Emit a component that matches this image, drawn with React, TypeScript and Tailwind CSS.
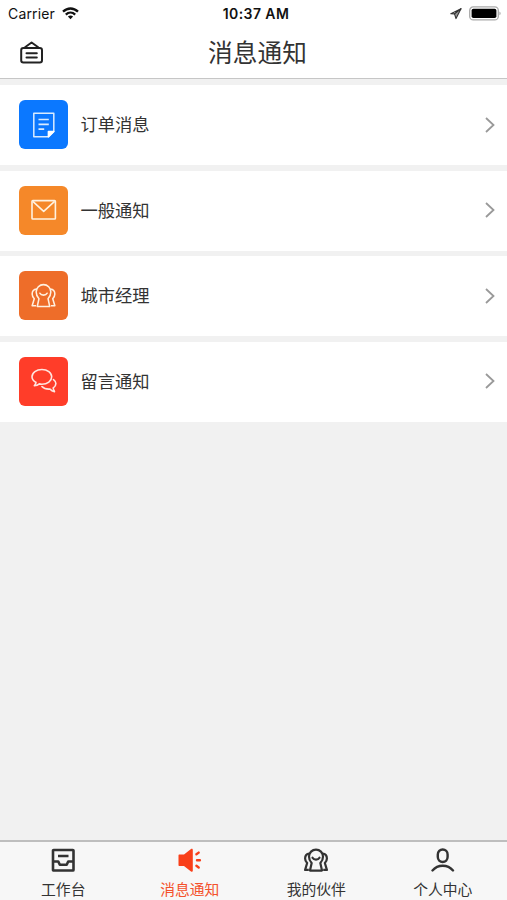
import type { ReactNode } from 'react'

const DocIcon = () => (
  <svg width="26" height="28" viewBox="0 0 26 28" fill="none" stroke="#d9ebff" strokeWidth="1.5">
    <path d="M2.8 2.2h20v18.3l-5.2 5.3H2.8z" strokeLinejoin="round" />
    <path d="M7.5 8.5h10.3M7.5 13.3h10.3M7.5 18.2h5.7" strokeWidth="1.7" />
    <path d="M17.4 25.8v-5.3h5.4z" fill="#fff" stroke="#fff" strokeLinejoin="round" />
  </svg>
)

const MailIcon = () => (
  <svg width="26" height="22" viewBox="0 0 26 22" fill="none" stroke="#fff2e0" strokeWidth="1.6" strokeLinejoin="round">
    <rect x="1" y="1.6" width="23.4" height="18.4" rx="0.8" />
    <path d="M1.8 2.4l10.9 10 10.9-10" />
  </svg>
)

const PeopleIcon = ({ size, color, weight }: { size: number; color: string; weight: number }) => (
  <svg
    width={size}
    height={size}
    viewBox="0 0 26 26"
    fill="none"
    stroke={color}
    strokeWidth={weight}
    strokeLinejoin="round"
  >
    <path d="M8.3 16.3C6.5 14.5 5.4 12 5.4 9.3a7.6 7.6 0 0 1 15.2 0c0 2.7-1.1 5.2-2.9 7l1.8 8.1h-13z" />
    <path d="M9.2 10.6c1.5 2.7 6.1 2.7 7.6 0" strokeLinecap="round" />
    <path d="M5.9 6.2C3 6.5 1.2 8.8 1.2 11.4c0 2 .9 3.6 2.2 4.9L1.2 23.7h4" />
    <path d="M20.1 6.2c2.9.3 4.7 2.6 4.7 5.2 0 2-.9 3.6-2.2 4.9l2.2 7.4h-4" />
  </svg>
)

const ChatIcon = () => (
  <svg
    width="26"
    height="26"
    viewBox="0 0 26 26"
    fill="none"
    stroke="#ffe5df"
    strokeWidth="1.6"
    strokeLinecap="round"
    strokeLinejoin="round"
  >
    <path d="M5 14.5C2.7 13.2 1 11.3 1 8.8c0-4.2 4.4-7.3 9.9-7.3s9.8 3.1 9.8 7.3-4.3 7.4-9.8 7.4c-.9 0-1.8-.1-2.6-.3-1.4 1.2-3 1.7-5 1.8.9-.9 1.5-2 1.7-3.400z" />
    <path d="M22.5 11.6c1.6 1.2 2.4 2.5 2.4 4 0 1.8-1.1 3.4-2.7 4.4.1 1.3.6 2.4 1.3 3.7-1.9-.3-3.5-1.3-4.6-2.6-3 .2-6.1-.6-8-2.6" />
  </svg>
)

const InboxIcon = () => (
  <svg width="24" height="24" viewBox="0 0 24 24" fill="none" stroke="#333" strokeWidth="2.6" strokeLinejoin="round">
    <rect x="2" y="2" width="20.5" height="20.5" rx="0.6" />
    <path d="M7 8h10.5M2 13.500h5.300l1.500 3.300h6.900l1.500-3.300h5.300" />
  </svg>
)

const SpeakerIcon = () => (
  <svg width="24" height="24" viewBox="0 0 24 24" fill="none" stroke="#f93f19" strokeWidth="2.4" strokeLinecap="round">
    <path
      d="M1.500 6.500H6l7-5.500c.9-.6 1.800-.2 1.800.8v20.900c0 1-.9 1.300-1.800.7l-7-5.500H1.500c-.7 0-1-.3-1-1V7.500c0-.7.3-1 1-1z"
      fill="#f93f19"
      stroke="none"
    />
    <path d="M18.400 6.300l2.300-1.700M19 12.200h2.900M18.400 17.800l2.300 1.700" />
  </svg>
)

const UserIcon = () => (
  <svg width="24" height="24" viewBox="0 0 24 24" fill="none" stroke="#333" strokeWidth="2.4" strokeLinecap="round">
    <rect x="6.8" y="1.5" width="9.8" height="12.5" rx="4.9" />
    <path d="M1.500 22.400c5.300-6.300 15.200-6.300 20.500 0" />
  </svg>
)

const HomeIcon = () => (
  <svg
    width="24"
    height="24"
    viewBox="0 0 24 24"
    fill="none"
    stroke="#222"
    strokeWidth="2"
    strokeLinecap="round"
    strokeLinejoin="round"
  >
    <rect x="2.2" y="7" width="20.8" height="14.5" rx="2.2" />
    <path d="M6 6.200l6.600-4.700 6.600 4.700M7.500 12.200h10.300M7.500 16.400h10.300" />
  </svg>
)

const StatusBar = () => (
  <div className="flex h-[27px] items-center justify-between pl-2 pr-[6px] text-[#111]">
    <div className="flex w-[150px] items-center gap-[7px]">
      <span className="text-[14px] leading-5 tracking-[0.15px]">Carrier</span>
      <svg width="17" height="13" viewBox="0 0 17 13" fill="none" stroke="#111" strokeWidth="2.3">
        <path d="M1 4.700c4.500-4.300 10.500-4.300 15 0M3.800 7.600c2.800-2.700 6.600-2.700 9.400 0" />
        <path d="M5.900 9.600c1.600-1.400 3.600-1.400 5.200 0l-2.600 2.700z" fill="#111" stroke="none" />
      </svg>
    </div>
    <span className="pl-[3px] text-[14px] font-semibold leading-5 tracking-[0.4px]">10:37 AM</span>
    <div className="flex w-[150px] items-center justify-end gap-[7px]">
      <svg width="12" height="12" viewBox="0 0 12 12" stroke="#333" strokeWidth="1.1" strokeLinejoin="round">
        <path d="M11 .8L.8 5.800l3.700.1z" fill="#fff" />
        <path d="M11 .8L4.500 5.900 6 10.600z" fill="#999" />
      </svg>
      <svg width="32" height="15" viewBox="0 0 32 15">
        <rect x="0.7" y="0.9" width="28.6" height="13" rx="3.5" fill="#fff" stroke="#aaa" strokeWidth="1.3" />
        <rect x="2.6" y="2.8" width="24.8" height="9.2" rx="1.8" fill="#000" />
        <path d="M30.500 5.500c1.400.8 1.400 3 0 3.800z" fill="#999" />
      </svg>
    </div>
  </div>
)

const rows: { label: string; tile: string; icon: ReactNode }[] = [
  { label: '订单消息', tile: 'bg-[#0b78ff]', icon: <DocIcon /> },
  { label: '一般通知', tile: 'bg-[#f58829]', icon: <MailIcon /> },
  { label: '城市经理', tile: 'bg-[#ee6d29]', icon: <PeopleIcon size={25} color="#fff0df" weight={1.6} /> },
  { label: '留言通知', tile: 'bg-[#ff3d29]', icon: <ChatIcon /> },
]

const tabs: { label: string; active?: boolean; icon: ReactNode }[] = [
  { label: '工作台', icon: <InboxIcon /> },
  { label: '消息通知', active: true, icon: <SpeakerIcon /> },
  { label: '我的伙伴', icon: <PeopleIcon size={24} color="#333" weight={2.4} /> },
  { label: '个人中心', icon: <UserIcon /> },
]

const App = () => (
  <div className="flex h-[900px] w-[507px] flex-col overflow-hidden bg-[#f1f1f1] font-['Inter','Noto_Sans_CJK_SC',sans-serif]">
    <header className="h-[79px] shrink-0 border-b border-[#c6c6c6] bg-white">
      <StatusBar />
      <div className="grid h-[51px] grid-cols-[84px_1fr_76px] items-center">
        <div className="pl-[19px]">
          <HomeIcon />
        </div>
        <h1 className="text-center text-[24.7px] font-normal leading-8 text-[#333]">消息通知</h1>
      </div>
    </header>

    <main className="flex flex-1 flex-col gap-[5.6px] pt-[6px]">
      {rows.map((row) => (
        <div key={row.label} className="flex h-[80px] items-center bg-white pb-[0.6px] pl-[19px] pr-[11px]">
          <div className={`flex h-[49px] w-[49px] items-center justify-center rounded-[6px] ${row.tile}`}>
            {row.icon}
          </div>
          <span className="ml-[12.5px] flex-1 pt-px text-[17.3px] leading-6 text-[#333]">{row.label}</span>
          <svg width="12" height="18" viewBox="0 0 12 18" fill="none" stroke="#999" strokeWidth="1.8">
            <path d="M2 2l7.500 7L2 16" />
          </svg>
        </div>
      ))}
    </main>

    <nav className="grid h-[60px] shrink-0 grid-cols-4 border-t-2 border-[#bebebe] bg-[#f7f7f7] pr-px">
      {tabs.map((tab) => (
        <div
          key={tab.label}
          className={`flex flex-col items-center pt-[6px] ${tab.active ? 'text-[#f4512c]' : 'text-[#333]'}`}
        >
          {tab.icon}
          <span className="mt-[8px] text-[14.8px] leading-5">{tab.label}</span>
        </div>
      ))}
    </nav>
  </div>
)

export default App
